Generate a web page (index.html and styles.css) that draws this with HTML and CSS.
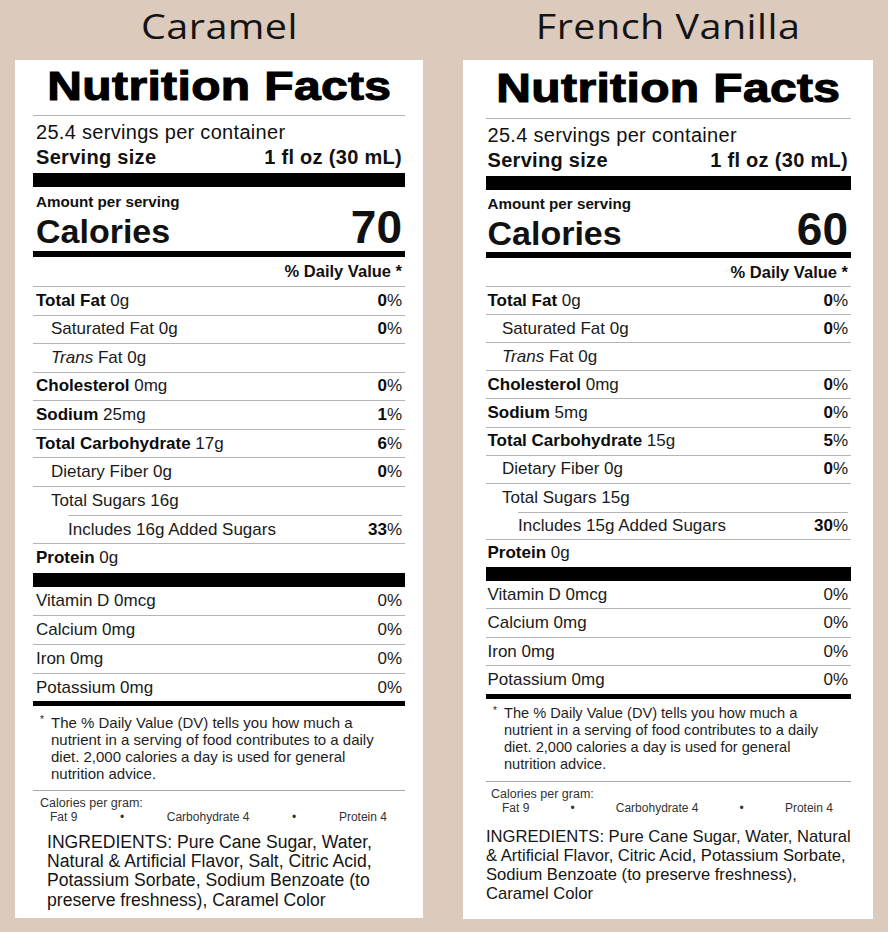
FILE: index.html
```html
<!DOCTYPE html>
<html lang="en">
<head>
<meta charset="utf-8">
<title>Nutrition Facts</title>
<link rel="stylesheet" href="styles.css">
</head>
<body>
<main class="page">
  <section class="panel panel--caramel">
    <h2 class="flavor"><span class="flavor-text">Caramel</span></h2>
    <div class="label">
      <div class="nf-head"><h1 class="nf-title">Nutrition Facts</h1></div>
      <div class="servings">
        <p class="servings-count">25.4 servings per container</p>
        <p class="serving-size"><b>Serving size</b><b>1 fl oz (30 mL)</b></p>
      </div>
      <div class="amount">
        <p class="amount-label">Amount per serving</p>
        <p class="cal-row"><b class="cal-word">Calories</b><b class="cal-num">70</b></p>
      </div>
      <div class="dv-head">% Daily Value *</div>
      <div class="row"><span><b>Total Fat</b> 0g</span><span><b>0</b>%</span></div>
      <div class="row row--sub"><span>Saturated Fat 0g</span><span><b>0</b>%</span></div>
      <div class="row row--sub"><span><i>Trans</i> Fat 0g</span></div>
      <div class="row"><span><b>Cholesterol</b> 0mg</span><span><b>0</b>%</span></div>
      <div class="row"><span><b>Sodium</b> 25mg</span><span><b>1</b>%</span></div>
      <div class="row"><span><b>Total Carbohydrate</b> 17g</span><span><b>6</b>%</span></div>
      <div class="row row--sub"><span>Dietary Fiber 0g</span><span><b>0</b>%</span></div>
      <div class="row row--sub row--open"><span>Total Sugars 16g</span></div>
      <div class="row row--added"><div class="added-inner"><span>Includes 16g Added Sugars</span><span><b>33</b>%</span></div></div>
      <div class="row row--protein"><span><b>Protein</b> 0g</span></div>
      <div class="row row--vit"><span>Vitamin D 0mcg</span><span>0%</span></div>
      <div class="row row--vit"><span>Calcium 0mg</span><span>0%</span></div>
      <div class="row row--vit"><span>Iron 0mg</span><span>0%</span></div>
      <div class="row row--vit row--last"><span>Potassium 0mg</span><span>0%</span></div>
      <div class="footnote">
        <span class="star">*</span>
        <p>The % Daily Value (DV) tells you how much a<br>nutrient in a serving of food contributes to a daily<br>diet. 2,000 calories a day is used for general<br>nutrition advice.</p>
      </div>
      <div class="cpg">
        <p class="cpg-title">Calories per gram:</p>
        <p class="cpg-row"><span>Fat 9</span><span>•</span><span>Carbohydrate 4</span><span>•</span><span>Protein 4</span></p>
      </div>
      <p class="ingredients">INGREDIENTS: Pure Cane Sugar, Water,<br>Natural &amp; Artificial Flavor, Salt, Citric Acid,<br>Potassium Sorbate, Sodium Benzoate (to<br>preserve freshness), Caramel Color</p>
    </div>
  </section>

  <section class="panel panel--vanilla">
    <h2 class="flavor"><span class="flavor-text">French Vanilla</span></h2>
    <div class="label">
      <div class="nf-head"><h1 class="nf-title">Nutrition Facts</h1></div>
      <div class="servings">
        <p class="servings-count">25.4 servings per container</p>
        <p class="serving-size"><b>Serving size</b><b>1 fl oz (30 mL)</b></p>
      </div>
      <div class="amount">
        <p class="amount-label">Amount per serving</p>
        <p class="cal-row"><b class="cal-word">Calories</b><b class="cal-num">60</b></p>
      </div>
      <div class="dv-head">% Daily Value *</div>
      <div class="row"><span><b>Total Fat</b> 0g</span><span><b>0</b>%</span></div>
      <div class="row row--sub"><span>Saturated Fat 0g</span><span><b>0</b>%</span></div>
      <div class="row row--sub"><span><i>Trans</i> Fat 0g</span></div>
      <div class="row"><span><b>Cholesterol</b> 0mg</span><span><b>0</b>%</span></div>
      <div class="row"><span><b>Sodium</b> 5mg</span><span><b>0</b>%</span></div>
      <div class="row"><span><b>Total Carbohydrate</b> 15g</span><span><b>5</b>%</span></div>
      <div class="row row--sub"><span>Dietary Fiber 0g</span><span><b>0</b>%</span></div>
      <div class="row row--sub row--open"><span>Total Sugars 15g</span></div>
      <div class="row row--added"><div class="added-inner"><span>Includes 15g Added Sugars</span><span><b>30</b>%</span></div></div>
      <div class="row row--protein"><span><b>Protein</b> 0g</span></div>
      <div class="row row--vit"><span>Vitamin D 0mcg</span><span>0%</span></div>
      <div class="row row--vit"><span>Calcium 0mg</span><span>0%</span></div>
      <div class="row row--vit"><span>Iron 0mg</span><span>0%</span></div>
      <div class="row row--vit row--last"><span>Potassium 0mg</span><span>0%</span></div>
      <div class="footnote">
        <span class="star">*</span>
        <p>The % Daily Value (DV) tells you how much a<br>nutrient in a serving of food contributes to a daily<br>diet. 2,000 calories a day is used for general<br>nutrition advice.</p>
      </div>
      <div class="cpg">
        <p class="cpg-title">Calories per gram:</p>
        <p class="cpg-row"><span>Fat 9</span><span>•</span><span>Carbohydrate 4</span><span>•</span><span>Protein 4</span></p>
      </div>
      <p class="ingredients">INGREDIENTS: Pure Cane Sugar, Water, Natural<br>&amp; Artificial Flavor, Citric Acid, Potassium Sorbate,<br>Sodium Benzoate (to preserve freshness),<br>Caramel Color</p>
    </div>
  </section>
</main>
</body>
</html>
```
FILE: styles.css
```css
* {
  box-sizing: border-box;
  margin: 0;
  padding: 0;
}

html,
body {
  background: #dccabd;
}

body {
  width: 888px;
  height: 932px;
  overflow: hidden;
  font-family: "Liberation Sans", Arial, Helvetica, sans-serif;
  color: #111;
}

.page {
  display: flex;
  gap: 40px;
  padding-left: 15px;
}

.panel {
  display: flex;
  flex-direction: column;
}

.panel--caramel {
  width: 408px;
  --pad-l: 18px;
  --pad-r: 18px;
  --pad-b: 7.5px;
  --txt-l: 3px;
  --ind: 18px;
  --ind2: 35px;
  --hdr-pt: 4px;
  --hdr-pb: 7px;
  --amt-pt: 7px;
  --cal-h: 34px;
  --cal-pb: 7px;
  --dv-h: 30px;
  --row-h: 28.56px;
  --prot-h: 29px;
  --vrow-h: 28.9px;
  --fn-pt: 7.5px;
  --fn-pb: 8.5px;
  --fn-size: 15px;
  --cpg-ind: 7px;
  --cpg-row-l: 17px;
  --ing-mt: 8.4px;
  --ing-size: 17.6px;
  --ing-lh: 19.3px;
  --ing-ind: 14px;
}

.panel--vanilla {
  width: 410px;
  --pad-l: 23px;
  --pad-r: 22px;
  --pad-b: 15.6px;
  --txt-l: 1.5px;
  --ind: 16px;
  --ind2: 32px;
  --hdr-pt: 6px;
  --hdr-pb: 8px;
  --amt-pt: 6px;
  --cal-h: 30px;
  --cal-pb: 10px;
  --dv-h: 29px;
  --row-h: 28.11px;
  --prot-h: 27px;
  --vrow-h: 28.5px;
  --fn-pt: 6.5px;
  --fn-pb: 7.5px;
  --fn-size: 14.6px;
  --cpg-ind: 5px;
  --cpg-row-l: 16px;
  --ing-mt: 12.4px;
  --ing-size: 16.6px;
  --ing-lh: 19px;
  --ing-ind: -3px;
}

.flavor {
  height: 60px;
  padding-top: 2px;
  font-family: "Open Sans", "Liberation Sans", sans-serif;
  font-weight: 400;
  font-size: 35px;
  line-height: 48px;
  text-align: center;
  color: #141414;
}

.flavor-text {
  display: inline-block;
  letter-spacing: 0.4px;
  transform: scaleX(1.13);
}

.label {
  background: #fff;
  display: flex;
  flex-direction: column;
  padding: 0 var(--pad-r) var(--pad-b) var(--pad-l);
}

.nf-head {
  padding: var(--hdr-pt) 0 var(--hdr-pb);
  border-bottom: 1px solid #b4b4b4;
  text-align: center;
}

.nf-title {
  display: inline-block;
  font-size: 40px;
  line-height: 44px;
  font-weight: 700;
  letter-spacing: 0.3px;
  color: #000;
  -webkit-text-stroke: 1.1px #000;
  transform: scaleX(1.2);
}

.servings {
  padding: 3.5px 3px 3.5px var(--txt-l);
  border-bottom: 14px solid #000;
  font-size: 20px;
  line-height: 25px;
  letter-spacing: 0.3px;
}

.serving-size {
  display: flex;
  justify-content: space-between;
}

.amount {
  padding: var(--amt-pt) 3px var(--cal-pb) var(--txt-l);
  border-bottom: 6px solid #000;
}

.amount-label {
  font-size: 15.2px;
  line-height: 16px;
  font-weight: 700;
}

.cal-row {
  display: flex;
  justify-content: space-between;
  align-items: baseline;
  height: var(--cal-h);
  line-height: 34px;
}

.cal-word {
  font-size: 34px;
}

.cal-num {
  font-size: 46px;
}

.dv-head {
  height: var(--dv-h);
  border-bottom: 1px solid #b4b4b4;
  display: flex;
  align-items: center;
  justify-content: flex-end;
  padding-right: 3px;
  font-size: 16.5px;
  font-weight: 700;
}

.row {
  height: var(--row-h);
  border-bottom: 1px solid #b4b4b4;
  display: flex;
  align-items: center;
  justify-content: space-between;
  padding: 0 3px 0 var(--txt-l);
  font-size: 17px;
  color: #1a1a1a;
}

.row b {
  color: #0c0c0c;
}

.row--sub {
  padding-left: var(--ind);
}

.row--open {
  border-bottom: none;
}

.row--added {
  padding-left: var(--ind2);
  align-items: stretch;
}

.added-inner {
  flex: 1;
  display: flex;
  align-items: center;
  justify-content: space-between;
  border-top: 1px solid #b4b4b4;
}

.row--protein {
  height: calc(var(--prot-h) + 14px);
  border-bottom: 14px solid #000;
}

.row--vit {
  height: var(--vrow-h);
}

.row--last {
  height: calc(var(--vrow-h) + 4px);
  border-bottom: 5px solid #000;
}

.footnote {
  display: flex;
  padding: var(--fn-pt) 0 var(--fn-pb) 7px;
  border-bottom: 1px solid #a8a8a8;
  font-size: var(--fn-size);
  line-height: 17px;
  color: #1e1e1e;
}

.star {
  width: 11px;
  flex: none;
  font-size: 10px;
  line-height: 12px;
}

.cpg {
  padding-top: 5px;
  color: #333;
}

.cpg-title {
  padding-left: var(--cpg-ind);
  font-size: 12.5px;
  line-height: 14px;
}

.cpg-row {
  display: flex;
  justify-content: space-between;
  padding: 0 18px 0 var(--cpg-row-l);
  font-size: 12px;
  line-height: 14px;
}

.ingredients {
  margin-top: var(--ing-mt);
  padding-left: var(--ing-ind);
  font-size: var(--ing-size);
  line-height: var(--ing-lh);
  white-space: nowrap;
  color: #151515;
}
```
